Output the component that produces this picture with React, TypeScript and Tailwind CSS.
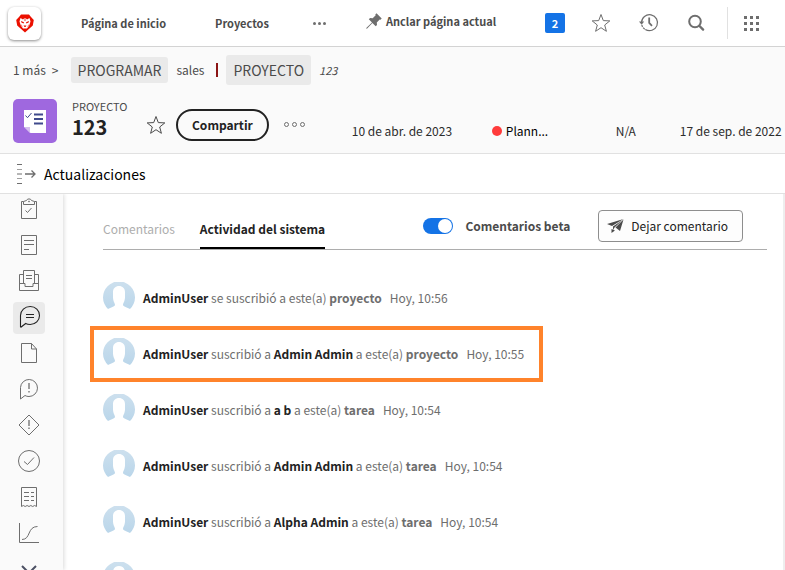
import type { ReactNode } from "react";

type Activity = { text?: ReactNode; time?: string; highlighted?: boolean };

const Dark = ({ children }: { children: ReactNode }) => (
  <b className="font-bold text-[#222222]">{children}</b>
);
const Muted = ({ children }: { children: ReactNode }) => (
  <b className="font-bold text-[#6e6e6e]">{children}</b>
);

const activities: Activity[] = [
  { text: <>se suscribió a este(a) <Muted>proyecto</Muted></>, time: "Hoy, 10:56" },
  {
    text: <>suscribió a <Dark>Admin Admin</Dark> a este(a) <Muted>proyecto</Muted></>,
    time: "Hoy, 10:55",
    highlighted: true,
  },
  { text: <>suscribió a <Dark>a b</Dark> a este(a) <Muted>tarea</Muted></>, time: "Hoy, 10:54" },
  { text: <>suscribió a <Dark>Admin Admin</Dark> a este(a) <Muted>tarea</Muted></>, time: "Hoy, 10:54" },
  { text: <>suscribió a <Dark>Alpha Admin</Dark> a este(a) <Muted>tarea</Muted></>, time: "Hoy, 10:54" },
  {},
];

const sideItems: { label: string; icon: ReactNode; active?: boolean }[] = [
  {
    label: "Tareas",
    icon: (
      <>
        <path d="M10.500 7.500h-2v17h15v-17h-2" />
        <path d="M10.500 10.500V7.500l3-1a2.600 2.200 0 0 1 5 0l3 1v3zM12.500 16.500l2 2 4-4.500" />
        <circle cx="16" cy="7.500" r=".5" />
      </>
    ),
  },
  {
    label: "Detalles",
    icon: <path d="M8.500 5.500h15v19h-15zM11 10.500h10M11 14.500h10M11 19.500h5" />,
  },
  {
    label: "Bandeja",
    icon: (
      <path d="M10.500 17.500v-13h11v13M10.500 8.500h-4v16h19v-16h-4M6.500 17.500h5.500v3h8v-3h5.500M13 9.500h6M13 12.500h6" />
    ),
  },
  {
    label: "Actualizaciones",
    active: true,
    icon: (
      <path
        strokeWidth="1.100"
        d="M7.500 25V13.500C7.500 8.300 11.900 4.500 17.200 4.500S26.500 8.500 26.500 13.500 22.400 22.500 17.200 22.500c-1.700 0-3.300-.3-4.500-1l-5.200 4M13 12.500h8M13 15.500h8"
      />
    ),
  },
  { label: "Documentos", icon: <path d="M8.500 5.500h10l5 5.500v13.500h-15zM18.500 5.500v5.500h5" /> },
  {
    label: "Problemas",
    icon: (
      <>
        <path d="M7.500 25V13.500a8.500 8.500 0 1 1 8.500 9c-1.500 0-3-.3-4-1z" />
        <path strokeWidth="1.300" d="M16 9v6M16 17v1.500" />
      </>
    ),
  },
  {
    label: "Riesgos",
    icon: (
      <>
        <path d="M16 5l10 10-10 10L6 15z" strokeLinejoin="round" />
        <path strokeWidth="1.300" d="M16 10v6M16 17.500V19" />
      </>
    ),
  },
  {
    label: "Aprobaciones",
    icon: (
      <>
        <circle cx="16" cy="15" r="10.500" />
        <path d="M11 15.500l3.500 3 6.500-7" />
      </>
    ),
  },
  {
    label: "Facturas",
    icon: (
      <path d="M8.500 24.500v-19h15v19l-1.900-1-1.900 1-1.900-1-1.800 1-1.900-1-1.900 1-1.900-1zM11 10.500h5M18 10.500h3M11 14.500h5M18 14.500h3M11 18.500h5M18 18.500h3" />
    ),
  },
  {
    label: "Rendimiento",
    icon: <path d="M6.500 5v19.500H26M9 21.500c9 0 5-13 15.500-13" />,
  },
  { label: "Mostrar más", icon: <path stroke="#4b5063" strokeWidth="2" d="M9 12l7 7 7-7" /> },
];

const starPath = "M10 1.500l2.300 6.100 6.500.3-5.100 4.100 1.700 6.300-5.400-3.600-5.400 3.600 1.700-6.300L1.200 7.900l6.500-.3z";

function Avatar() {
  return (
    <svg viewBox="0 0 32 32" className="size-8 shrink-0" aria-hidden="true">
      <defs>
        <linearGradient id="avatar" x1="0" y1="0" x2="0" y2="1">
          <stop offset="0" stopColor="#cde0ee" />
          <stop offset="1" stopColor="#bad6ea" />
        </linearGradient>
      </defs>
      <path
        fill="url(#avatar)"
        d="M5 27A16 16 0 1 1 27 27C24.500 25.500 20 24.500 20 23c0-2 2-3.500 2-8V10c0-3.500-2.500-6-6-6s-6 2.500-6 6v5c0 4.500 2 6 2 8 0 1.500-4.500 2.500-7 4z"
      />
    </svg>
  );
}

function TopBar() {
  return (
    <header className="flex h-[47px] items-center border-b border-[#d3d3d3] bg-white pr-[26px] pl-2 text-[11px] font-bold text-[#4b4b4b]">
      <a href="#inicio" aria-label="Inicio" className="mr-10 flex size-[33px] shrink-0 items-center justify-center rounded-md bg-white shadow-[0_1px_3px_rgba(0,0,0,0.45)]">
        <svg viewBox="0 0 18 19" className="h-[19px] w-[18px]">
          <path fill="#eb1000" d="M5 .5h8l2 2.500 2.800 3-1 5.500L9 18.500 1.200 11.500.2 6 3 3z" />
          <path fill="#fff" d="M4.500 4l2.500 1.500L8.500 4h1L11 5.500 13.500 4l1 3.500-1.300 4-2.200 3H7l-2.200-3-1.300-4z" />
          <path fill="#eb1000" d="M5 7l3 1.200-.4 1.200-2.200-.8zM13 7l-3 1.200.4 1.200 2.200-.8zM7.500 11.500h3L9.500 13h-1zM8.600 3.500h.8v3.500h-.8zM5.500 10.500l1 2-.3.300-1-1.800zM12.500 10.500l-1 2 .3.300 1-1.800z" />
        </svg>
      </a>
      <nav className="flex items-center gap-[49px] whitespace-nowrap">
        <a href="#inicio">Página de inicio</a>
        <a href="#proyectos">Proyectos</a>
      </nav>
      <button aria-label="Más" className="ml-11 flex gap-[2px]">
        <i className="size-[3px] rounded-full bg-[#6e6e6e]" />
        <i className="size-[3px] rounded-full bg-[#6e6e6e]" />
        <i className="size-[3px] rounded-full bg-[#6e6e6e]" />
      </button>
      <button className="ml-10 flex items-center gap-1 pb-1 whitespace-nowrap">
        <svg viewBox="0 0 16 16" className="size-4" fill="#6e6e6e" aria-hidden="true">
          <path d="M10.500.3l5.200 5.200-1.200 1.200-.8-.3-2.900 3 .2 2.600-1.300 1.300-3.300-3.300-5.200 5.500-1 .3.300-1L6 9.500 2.800 6.300 4.100 5l2.600.2 3-2.900-.4-.8z" />
        </svg>
        Anclar página actual
      </button>
      <div className="ml-auto flex items-center">
        <button className="size-5 rounded-[2px] bg-[#1473e6] text-white">2</button>
        <button aria-label="Favoritos" className="ml-[26px]">
          <svg viewBox="0 0 20 20" className="size-5" fill="none" stroke="#6e6e6e"><path d={starPath} /></svg>
        </button>
        <button aria-label="Recientes" className="ml-7">
          <svg viewBox="0 0 20 20" className="size-5" fill="none" stroke="#6e6e6e">
            <path strokeWidth="1.200" d="M2.500 9.500A8 8 0 1 1 6.300 16.500" />
            <path strokeWidth="1.200" strokeDasharray="2 1" d="M2.800 12A8 8 0 0 0 6.500 16.700" />
            <path fill="#6e6e6e" stroke="none" d="M0 8.500h5.200L2.600 11.700z" />
            <path strokeWidth="1.800" d="M10.200 4.500v5.500l2.800 2.800" />
          </svg>
        </button>
        <button aria-label="Buscar" className="ml-7">
          <svg viewBox="0 0 20 20" className="size-5" fill="none" stroke="#6e6e6e" strokeWidth="2">
            <circle cx="8" cy="8.500" r="5.800" />
            <path strokeWidth="2.400" strokeLinecap="round" d="M12.500 13l3.600 3.600" />
          </svg>
        </button>
        <span className="ml-5 h-8 w-px bg-[#e1e1e1]" />
        <button aria-label="Aplicaciones" className="ml-4 grid grid-cols-3 gap-[3px]">
          {Array.from({ length: 9 }, (_, i) => (
            <i key={i} className="size-[3px] bg-[#6e6e6e]" />
          ))}
        </button>
      </div>
    </header>
  );
}

function ProjectHeader() {
  return (
    <section className="h-[107px] overflow-hidden border-b border-[#e1e1e1] bg-[#fafafa] pl-[13px] whitespace-nowrap">
      <nav aria-label="Ruta" className="flex h-[46px] items-center text-[12px] leading-5 text-[#4b4b4b]">
        <a href="#mas">1 más</a>
        <span className="ml-[6px]">&gt;</span>
        <a href="#programar" className="ml-3 rounded-[3px] bg-[#eaeaea] px-[7px] py-[3px] text-[14px]">PROGRAMAR</a>
        <a href="#sales" className="ml-2">sales</a>
        <span className="mr-2 ml-3 h-[14px] w-[2px] bg-[#8c1515]" />
        <a href="#proyecto" className="rounded-[3px] bg-[#eaeaea] px-[7px] py-[5px] text-[14px]">PROYECTO</a>
        <i className="ml-2 text-[11px]">123</i>
      </nav>
      <div className="flex items-start pt-[6px]">
        <span className="flex size-11 shrink-0 items-center justify-center rounded-[5px] bg-[#9f68df]">
          <svg viewBox="0 0 22 23" className="h-[23px] w-[22px]" aria-hidden="true">
            <path fill="#fff" d="M0 0h22v23H6.500L0 16.500z" />
            <path fill="#d5bfee" d="M0 17h6v6z" />
            <path stroke="#3f4a8c" fill="none" d="M1.500 5.500l2 2.200L7.500 3" />
            <path stroke="#3f4a8c" strokeWidth="2" d="M10 4.500h9M10 9h9M10 13.500h9" />
          </svg>
        </span>
        <div className="ml-[15px] w-[74px] shrink-0">
          <p className="text-[11px] leading-[14px] text-[#4b4b4b]">PROYECTO</p>
          <h1 className="text-[20px] leading-7 font-bold text-[#222222]">123</h1>
        </div>
        <button aria-label="Marcar como favorito" className="mt-4 shrink-0">
          <svg viewBox="0 0 20 20" className="size-5" fill="none" stroke="#4b4b4b"><path d={starPath} /></svg>
        </button>
        <button className="mt-[10px] ml-[10px] h-8 rounded-full border-2 border-[#222222] px-[14px] text-[12px] leading-4 font-bold text-[#222222]">
          Compartir
        </button>
        <button aria-label="Más acciones" className="mt-[23px] ml-[15px] flex gap-[3px]">
          <i className="size-[5px] rounded-full border border-[#6e6e6e]" />
          <i className="size-[5px] rounded-full border border-[#6e6e6e]" />
          <i className="size-[5px] rounded-full border border-[#6e6e6e]" />
        </button>
        <dl className="mt-[22px] ml-[47px] flex text-[12px] leading-5 text-[#2c2c2c]">
          <dd className="w-[140px] shrink-0">10 de abr. de 2023</dd>
          <dd className="flex w-[124px] shrink-0 items-center gap-1 text-black">
            <i className="size-[10px] rounded-full bg-[#ff3b3b]" />
            Plann...
          </dd>
          <dd className="w-16 shrink-0">N/A</dd>
          <dd>17 de sep. de 2022</dd>
        </dl>
      </div>
    </section>
  );
}

export default function App() {
  return (
    <div className="flex h-screen flex-col overflow-hidden bg-white font-['Noto_Sans_CJK_SC',sans-serif]">
      <TopBar />
      <ProjectHeader />
      <div className="flex h-10 shrink-0 items-center gap-2 border-b border-[#e1e1e1] pl-4">
        <svg viewBox="0 0 20 20" className="size-5" fill="none" stroke="#6e6e6e" aria-hidden="true">
          <path d="M1 .5h5M1 10h5M1 19.500h5" />
          <path stroke="#a0a0a0" d="M1 5.500h5M1 14.500h5" />
          <path strokeWidth="1.300" d="M9 10h10M15.500 6.500L19 10l-3.500 3.500" />
        </svg>
        <h2 className="text-[14px] leading-5 text-black">Actualizaciones</h2>
      </div>
      <div className="flex min-h-0 flex-1 overflow-hidden">
        <nav aria-label="Secciones" className="flex w-[63px] shrink-0 flex-col gap-1 bg-[#fafafa] pl-[13px] shadow-[1px_0_4px_rgba(0,0,0,0.15)]">
          {sideItems.map((item) => (
            <button
              key={item.label}
              aria-label={item.label}
              className={item.active ? "size-8 shrink-0 rounded bg-[#eaeaea] text-[#222222]" : "size-8 shrink-0 rounded text-[#6e6e6e]"}
            >
              <svg viewBox="0 0 32 32" className="size-8" fill="none" stroke="currentColor">
                {item.icon}
              </svg>
            </button>
          ))}
        </nav>
        <main className="min-w-0 flex-1 border-r-2 border-[#eeeeee] pt-4 pr-4 pl-[27px]">
          <div className="ml-[13px] flex h-10 items-stretch border-b border-[#adadad] whitespace-nowrap">
            <div role="tablist" className="flex gap-[25px] text-[12px] leading-5">
              <button role="tab" aria-selected="false" className="border-b-2 border-transparent text-[#adadad]">Comentarios</button>
              <button role="tab" aria-selected="true" className="border-b-2 border-black font-bold text-[#222222]">Actividad del sistema</button>
            </div>
            <div className="mr-6 mb-[7px] ml-auto flex items-center">
              <input
                id="beta"
                type="checkbox"
                role="switch"
                defaultChecked
                className="flex h-4 w-[30px] appearance-none items-center justify-end rounded-full bg-[#1473e6] px-px before:size-[14px] before:rounded-full before:bg-white"
              />
              <label htmlFor="beta" className="ml-3 text-[12px] leading-5 font-bold text-[#4b4b4b]">Comentarios beta</label>
              <button className="ml-7 flex h-8 items-center gap-[7px] rounded border border-[#8e8e8e] bg-[#fdfdfd] pr-[14px] pl-2 text-[12px] leading-5 text-[#222222]">
                <svg viewBox="0 0 17 14" className="h-[14px] w-[17px]" fill="#4b4b4b" aria-hidden="true">
                  <path d="M0 5L16.500 0 5 7zM16.500.5L13 12l-4.500-3.500zM15.500 1L6 7.500V11l1.500-2.500zM4.500 10L8 11.500 4.500 14z" />
                </svg>
                Dejar comentario
              </button>
            </div>
          </div>
          <ul className="mt-5 flex flex-col items-start">
            {activities.map((item, i) => (
              <li
                key={i}
                className={
                  item.highlighted
                    ? "flex h-14 items-center gap-2 border-4 border-[#ff832b] pr-[15px] pl-[9px]"
                    : "flex h-14 items-center gap-2 border-4 border-transparent pr-[15px] pl-[9px]"
                }
              >
                <Avatar />
                {item.text && (
                  <p className="text-[12px] leading-5 whitespace-nowrap text-[#6e6e6e]">
                    <Dark>AdminUser</Dark> {item.text}
                    <time className="ml-2">{item.time}</time>
                  </p>
                )}
              </li>
            ))}
          </ul>
        </main>
      </div>
    </div>
  );
}
